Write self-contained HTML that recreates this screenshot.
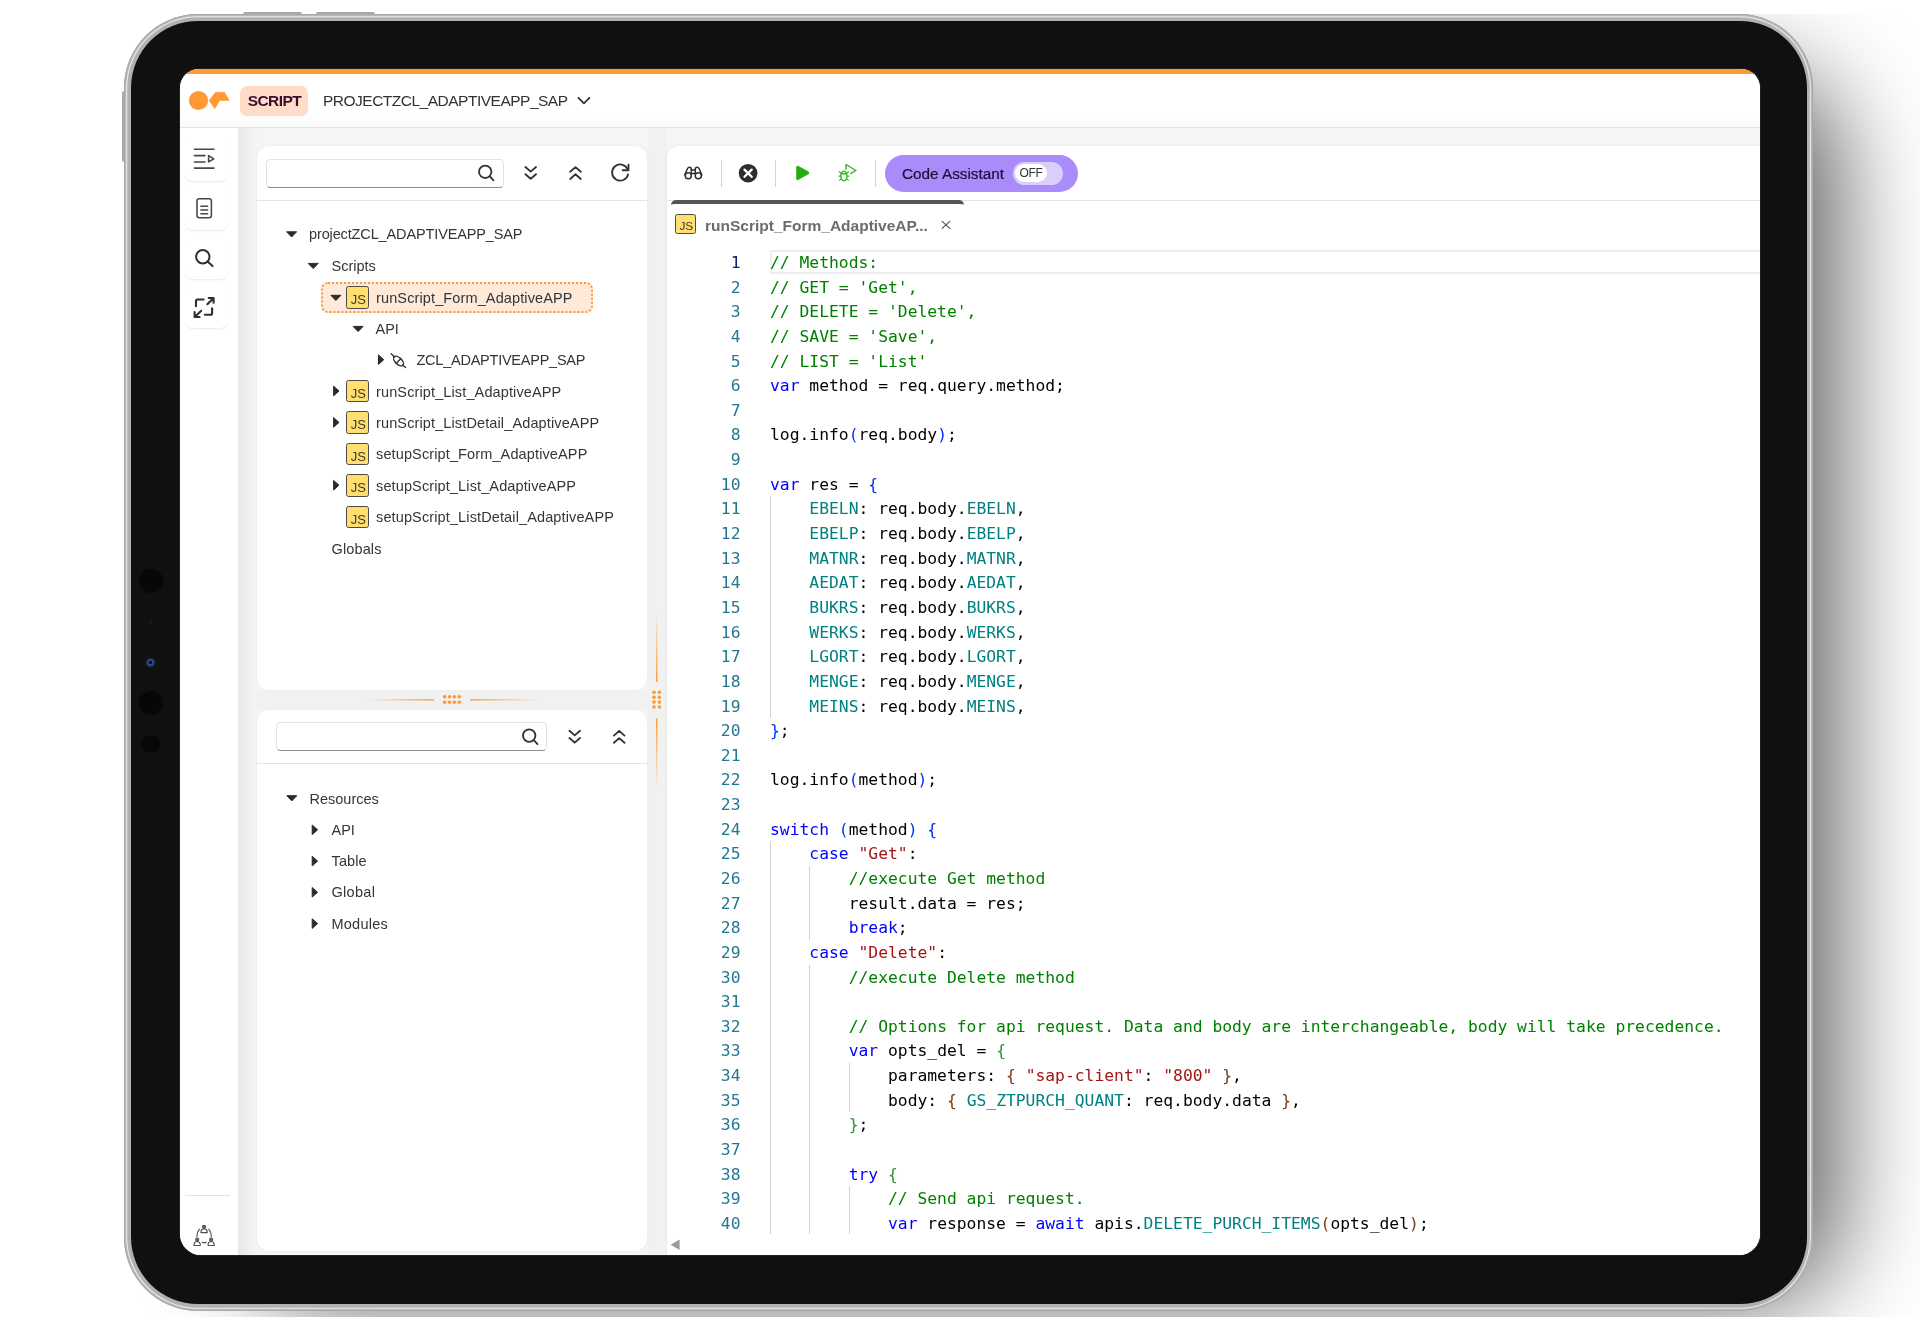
<!DOCTYPE html>
<html lang="en">
<head>
<meta charset="utf-8">
<title>Script Editor</title>
<style>
*{box-sizing:border-box;margin:0;padding:0}
html,body{width:1920px;height:1317px;overflow:hidden;background:#fff}
body{position:relative;font-family:"Liberation Sans",Arial,sans-serif;color:#32363a}
svg{position:absolute;overflow:visible}
/* ---------- device ---------- */
#shw{position:absolute;left:0;top:14px;width:1920px;height:1303px;overflow:hidden}
#shadow{position:absolute;left:240px;top:56px;width:1600px;height:1235px;border-radius:90px;background:rgba(0,0,0,.62);filter:blur(50px)}
#btnTop1,#btnTop2,#btnLeft{position:absolute;background:linear-gradient(#a2a2a2,#c4c4c4);border-radius:2px}
#btnTop1{left:243px;top:11.5px;width:59px;height:5px}
#btnTop2{left:316px;top:11.5px;width:59px;height:5px}
#btnLeft{left:122px;top:91px;width:5px;height:71px;background:linear-gradient(90deg,#a2a2a2,#c4c4c4)}
#frame{position:absolute;left:123.7px;top:13.5px;width:1689.8px;height:1297px;border-radius:74px;
  background:#b1b1b1;box-shadow:inset 0 0 0 .8px #a4a4a4, inset 0 0 0 2.2px #b8b8b8, inset 0 0 0 3.2px #ededed}
#bezel{position:absolute;left:130.6px;top:20.5px;width:1676.2px;height:1283.2px;border-radius:67px;background:#101010}
.cam{position:absolute;border-radius:50%;background:#070707}
#screen{position:absolute;left:180px;top:69px;width:1580px;height:1186px;border-radius:19px 19px 21px 21px;box-shadow:0 0 0 1px #222;overflow:hidden;background:#f5f5f6}
#app{position:absolute;left:-180px;top:-69px;width:1920px;height:1317px;will-change:transform}
#topbar{position:absolute;left:180px;top:69px;width:1580px;height:5px;background:#ff9a33}
#header{position:absolute;left:180px;top:74px;width:1580px;height:54px;background:linear-gradient(#fff 70%,#fafafa);border-bottom:1px solid #e3e3e3}
#badge{position:absolute;left:240.4px;top:86px;width:67.5px;height:29.5px;border-radius:7px;background:#ffdcc6;
  color:#3a0c30;font-weight:700;font-size:15.5px;letter-spacing:-.57px;line-height:30.5px;text-align:center;padding-left:.6px}
#proj{position:absolute;left:323px;top:86px;height:29px;line-height:29px;font-size:15.5px;letter-spacing:-.5px;color:#2f3338;white-space:nowrap}
#sidebar{position:absolute;left:180px;top:128px;width:58px;height:1127px;background:#fff}
#sideshadow{position:absolute;left:238px;top:128px;width:19px;height:1127px;background:linear-gradient(90deg,#e8e8ea,#f5f5f6)}
.sbtn{position:absolute;left:184px;width:45px;height:44px;border-radius:9px;background:#fff;box-shadow:0 2px 2px -1px rgba(0,0,0,.09)}
#sideline{position:absolute;left:185px;top:1195px;width:45px;height:1px;background:#e2e2e2}
.panel{position:absolute;background:#fff;border-radius:12px;box-shadow:0 0 2px rgba(0,0,0,.10)}
#p1{left:257px;top:146px;width:390px;height:544px}
.split{position:absolute;background:#f1f1f1}
#p2{left:257px;top:709.5px;width:390px;height:541.5px}
#ed{left:667px;top:146px;width:1120px;height:1120px;border-radius:12px 0 0 0}
.hline{position:absolute;height:1px;background:#e4e4e4}
.inp{position:absolute;height:29.3px;border:1.3px solid #e2e2e2;border-bottom:1.3px solid #8c8c8c;border-radius:4.5px;background:#fff}
/* ---------- tree ---------- */
.tr{position:absolute;height:31px;line-height:31px;font-size:14.5px;color:#32363a;white-space:nowrap;margin-top:.5px}
.lc{letter-spacing:.125px}
.js{position:absolute;width:22.4px;height:22.4px;border:1.9px solid #4b4a46;border-radius:2.5px;background:#ffdf70;
  font-size:13px;line-height:25.4px;color:#3b3828;text-align:right;padding-right:1.7px;letter-spacing:0;overflow:hidden;margin:-.2px 0 0 -.2px}
#sel{position:absolute;left:321px;top:282px;width:272px;height:31px;border:2px dotted #ff9a36;border-radius:7px;background:#ffead9}
/* ---------- editor ---------- */
.vsep{position:absolute;width:1px;top:160px;height:27px;background:#d4d4d4}
#pill{position:absolute;left:885px;top:155px;width:193px;height:37px;border-radius:19px;background:#a98cf9}
#pilltxt{-webkit-text-stroke:.2px #1c0f38;position:absolute;left:902px;top:155px;height:37px;line-height:37px;font-size:15.3px;color:#1c0f38;white-space:nowrap}
#tog{position:absolute;left:1013px;top:162px;width:50px;height:23px;border-radius:12px;background:#d9cefc}
#knob{position:absolute;left:1015px;top:164px;width:32px;height:18px;border-radius:9px;background:#fff;
  font-size:12px;line-height:19px;text-align:center;color:#333;letter-spacing:-.3px}
#tabbar{position:absolute;left:671px;top:200px;width:293px;height:8px;border-top:4px solid #555;border-radius:5px 5px 0 0}
#tabtxt{position:absolute;left:705px;top:212.5px;height:25px;line-height:25px;font-size:15.5px;font-weight:700;color:#6a6d70;white-space:nowrap}
#code{position:absolute;left:667px;top:251px;width:1100px;height:983px;overflow:hidden;font-family:"DejaVu Sans Mono","Liberation Mono",monospace;font-size:16.33px;color:#000}
.ln{position:absolute;left:0;width:1100px;height:24.64px;line-height:24.64px;white-space:pre}
.ln i{position:absolute;left:0;width:73.5px;text-align:right;color:#237893;font-style:normal}
.ln b{position:absolute;left:103px;font-weight:400}
.g{position:absolute;width:1px;background:#d3d3d3}
.k{color:#0000ff}.c{color:#008000}.s{color:#a31515}.t{color:#008080}
.b1{color:#0431fa}.b2{color:#319331}.b3{color:#7b3814}
#cur{position:absolute;left:770px;top:250px;width:1000px;height:24px;border:2px solid #eee}
</style>
</head>
<body>
<div id="shw"><div id="shadow"></div></div>
<div id="btnTop1"></div><div id="btnTop2"></div><div id="btnLeft"></div>
<div id="frame"></div>
<div id="bezel"></div>
<div class="cam" style="left:139px;top:569px;width:24px;height:24px"></div>
<div class="cam" style="left:149px;top:620px;width:4px;height:4px;background:#1b1b1b"></div>
<div class="cam" style="left:145px;top:657px;width:11px;height:11px;background:#1d1d1f"></div>
<div class="cam" style="left:147px;top:659px;width:7px;height:7px;background:radial-gradient(circle at 50% 50%,#07122a 0 28%,#2b5fc0 50%,#14306c 100%)"></div>
<div class="cam" style="left:139px;top:691px;width:24px;height:24px"></div>
<div class="cam" style="left:142px;top:735px;width:18px;height:18px"></div>
<div id="screen"><div id="app">
  <div id="topbar"></div>
  <div id="header"></div>
  <!-- logo -->
  <svg style="left:180px;top:74px" width="60" height="54" viewBox="180 74 60 54">
    <circle cx="198.5" cy="100.5" r="9.6" fill="#ff9a33"/>
    <path d="M209.2 100.5 L215.6 92.2 L224.3 92.2 L229.3 100.5 L219.6 100.5 L214.8 108.8 Z" fill="#ff9a33" stroke="#ff9a33" stroke-width=".6" stroke-linejoin="round"/>
  </svg>
  <div id="badge">SCRIPT</div>
  <div id="proj">PROJECTZCL_ADAPTIVEAPP_SAP</div>
  <svg style="left:576px;top:94px" width="16" height="14" viewBox="576 94 16 14">
    <path d="M578.4 97.8 L583.9 103.3 L589.4 97.8" fill="none" stroke="#32363a" stroke-width="1.8" stroke-linecap="round" stroke-linejoin="round"/>
  </svg>
  <div id="sidebar"></div>
  <div id="sideshadow"></div>
  <div class="sbtn" style="top:137px"></div>
  <div class="sbtn" style="top:186px"></div>
  <div class="sbtn" style="top:235px"></div>
  <div class="sbtn" style="top:284px"></div>
  <!-- sidebar icons -->
  <svg style="left:180px;top:128px" width="58" height="220" viewBox="180 128 58 220" fill="none" stroke="#474747" stroke-linecap="round" stroke-linejoin="round">
    <g stroke-width="1.55">
      <path d="M194.4 149.3H214 M194.4 155.6H205 M194.4 161.9H205 M194.4 168.1H214"/>
      <path d="M208.6 155.6L213.8 158.8L208.6 161.9Z"/>
      <rect x="197" y="198.7" width="14.4" height="19" rx="2.2"/>
      <path d="M200.9 206.2H207.6 M200.9 210H207.6 M200.9 213.8H207.6"/>
    </g>
    <g stroke-width="2" stroke="#2f2f2f">
      <circle cx="202.8" cy="256.8" r="6.7"/>
      <path d="M207.8 261.7L212.6 266.1"/>
    </g>
    <g stroke-width="2.1" stroke="#2f2f2f">
      <path d="M196 306.3V301 Q196 299.5 197.5 299.5H203.6"/>
      <path d="M204.9 314.8H210.6 Q212.1 314.8 212.1 313.3V308.3"/>
      <path d="M207.4 304.2L213.5 298.1 M208.7 298H213.6V302.8"/>
      <path d="M201.2 310.8L194.7 316.9 M194.6 312.1V317H199.6"/>
    </g>
  </svg>
  <div id="sideline"></div>
  <!-- bottom sidebar icon -->
  <svg style="left:190px;top:1222px" width="28" height="28" viewBox="190 1222 28 28" fill="none" stroke="#505050" stroke-width="1.2" stroke-linecap="round" stroke-linejoin="round">
    <circle cx="204.05" cy="1226.8" r="1.5" fill="#777"/><path d="M201.0 1232.7Q200.8 1228.8 204.05 1228.6Q207.4 1228.8 207.2 1232.7Z"/>
    <circle cx="197.2" cy="1239.7" r="1.5" fill="#777"/><path d="M194.1 1245.5Q193.9 1241.7 197.2 1241.5Q200.5 1241.7 200.3 1245.5Z"/>
    <circle cx="211.15" cy="1239.7" r="1.5" fill="#777"/><path d="M208.1 1245.5Q207.8 1241.7 211.15 1241.5Q214.5 1241.7 214.2 1245.5Z"/>
    <path d="M199.4 1229.2Q196.9 1232.2 196.9 1236.4M208.8 1229.2Q211.3 1232.2 211.3 1236.4M202.2 1242.3Q204.2 1243.4 206.3 1242.3"/>
  </svg>
  <div class="split" style="left:648px;top:128px;width:18.5px;height:1127px"></div>
  <div class="split" style="left:256px;top:690.5px;width:392px;height:18.5px"></div>
  <div class="panel" id="p1"></div>
  <div class="panel" id="p2"></div>
  <!-- panel 1 toolbar -->
  <div class="inp" style="left:265.8px;top:158.6px;width:238px"></div>
  <div class="hline" style="left:257px;top:200px;width:390px"></div>
  <svg style="left:470px;top:155px" width="170" height="36" viewBox="470 155 170 36" fill="none" stroke="#333" stroke-width="1.85" stroke-linecap="round" stroke-linejoin="round">
    <circle cx="485.2" cy="171.8" r="6.2"/><path d="M489.8 176.4L493.5 180.3"/>
    <path d="M525.4 167L530.7 171.6L536 167 M525.4 174.2L530.7 178.8L536 174.2"/>
    <path d="M570.2 171.8L575.5 167.1L580.8 171.8 M570.2 179L575.5 174.3L580.8 179"/>
    <path d="M627.6 169.2 A8.1 8.1 0 1 0 628.1 174.4"/>
    <path d="M628.5 164.6V170.2H622.7"/>
  </svg>
  <!-- tree 1 -->
  <div id="sel"></div>
  <svg style="left:257px;top:200px" width="390" height="380" viewBox="257 200 390 380" fill="#2b2b2b" stroke="#2b2b2b" stroke-width="1" stroke-linejoin="round">
    <path d="M286.6 231.8H296.6L291.6 237Z"/>
    <path d="M308.2 263.4H318.2L313.2 268.6Z"/>
    <path d="M330.9 295.3H340.9L335.9 300.5Z"/>
    <path d="M353.1 326.4H363.1L358.1 331.6Z"/>
    <path d="M378.4 354.9V364.5L383.8 359.7Z"/>
    <path d="M333.6 386.2V395.8L339 391Z"/>
    <path d="M333.6 417.6V427.2L339 422.4Z"/>
    <path d="M333.6 480.4V490L339 485.2Z"/>
    <g fill="none" stroke="#333" stroke-width="1.4" stroke-linecap="round">
      <path d="M391.2 353.8L394.4 356.9M402.7 364.9L405.6 367.6"/>
      <ellipse cx="398.5" cy="361" rx="6" ry="3.3" transform="rotate(44 398.5 361)"/>
      <path d="M400.7 358.8L396.3 363.2"/>
    </g>
  </svg>
  <div class="tr" style="left:309px;top:218.4px;letter-spacing:-.13px">projectZCL_ADAPTIVEAPP_SAP</div>
  <div class="tr" style="left:331.5px;top:250.5px">Scripts</div>
  <div class="js" style="left:346.5px;top:286.5px">JS</div>
  <div class="tr lc" style="left:376px;top:282px">runScript_Form_AdaptiveAPP</div>
  <div class="tr" style="left:375.5px;top:313.3px">API</div>
  <div class="tr" style="left:416.5px;top:344.6px;letter-spacing:-.24px">ZCL_ADAPTIVEAPP_SAP</div>
  <div class="js" style="left:346.5px;top:380.2px">JS</div>
  <div class="tr lc" style="left:376px;top:376px">runScript_List_AdaptiveAPP</div>
  <div class="js" style="left:346.5px;top:411.6px">JS</div>
  <div class="tr lc" style="left:376px;top:407.4px">runScript_ListDetail_AdaptiveAPP</div>
  <div class="js" style="left:346.5px;top:443px">JS</div>
  <div class="tr lc" style="left:376px;top:438.8px">setupScript_Form_AdaptiveAPP</div>
  <div class="js" style="left:346.5px;top:474.4px">JS</div>
  <div class="tr lc" style="left:376px;top:470.2px">setupScript_List_AdaptiveAPP</div>
  <div class="js" style="left:346.5px;top:505.8px">JS</div>
  <div class="tr lc" style="left:376px;top:501.6px">setupScript_ListDetail_AdaptiveAPP</div>
  <div class="tr lc" style="left:331.5px;top:533px">Globals</div>
  <!-- splitters -->
  <svg style="left:360px;top:600px" width="310" height="200" viewBox="360 600 310 200">
    <defs>
      <linearGradient id="gl" x1="0" x2="1"><stop offset="0" stop-color="#ff9a33" stop-opacity="0"/><stop offset="1" stop-color="#ff9a33"/></linearGradient>
      <linearGradient id="gr" x1="0" x2="1"><stop offset="0" stop-color="#ff9a33"/><stop offset="1" stop-color="#ff9a33" stop-opacity="0"/></linearGradient>
      <linearGradient id="gt" x1="0" x2="0" y1="0" y2="1"><stop offset="0" stop-color="#ff9a33" stop-opacity="0"/><stop offset="1" stop-color="#ff9a33"/></linearGradient>
      <linearGradient id="gb" x1="0" x2="0" y1="0" y2="1"><stop offset="0" stop-color="#ff9a33"/><stop offset="1" stop-color="#ff9a33" stop-opacity="0"/></linearGradient>
    </defs>
    <rect x="366" y="699.1" width="68.2" height="1.4" fill="url(#gl)"/>
    <rect x="470.1" y="699.1" width="71" height="1.4" fill="url(#gr)"/>
    <g fill="#ff9a33">
      <circle cx="444.6" cy="696.8" r="1.8"/><circle cx="449.5" cy="696.8" r="1.8"/><circle cx="454.4" cy="696.8" r="1.8"/><circle cx="459.3" cy="696.8" r="1.8"/><circle cx="444.6" cy="702.3" r="1.8"/><circle cx="449.5" cy="702.3" r="1.8"/><circle cx="454.4" cy="702.3" r="1.8"/><circle cx="459.3" cy="702.3" r="1.8"/><circle cx="654" cy="692.2" r="1.8"/><circle cx="659.4" cy="692.2" r="1.8"/><circle cx="654" cy="697.2" r="1.8"/><circle cx="659.4" cy="697.2" r="1.8"/><circle cx="654" cy="702.1" r="1.8"/><circle cx="659.4" cy="702.1" r="1.8"/><circle cx="654" cy="707" r="1.8"/><circle cx="659.4" cy="707" r="1.8"/>
    </g>
    <rect x="656" y="611" width="1.4" height="71" fill="url(#gt)"/>
    <rect x="656" y="718.3" width="1.4" height="71" fill="url(#gb)"/>
  </svg>
  <!-- panel 2 toolbar -->
  <div class="inp" style="left:275.5px;top:722px;width:271.5px"></div>
  <div class="hline" style="left:257px;top:762.7px;width:390px"></div>
  <svg style="left:515px;top:718px" width="120" height="36" viewBox="515 718 120 36" fill="none" stroke="#333" stroke-width="1.85" stroke-linecap="round" stroke-linejoin="round">
    <circle cx="529.2" cy="735.6" r="6.2"/><path d="M533.8 740.2L537.5 744.1"/>
    <path d="M569.4 730.8L574.7 735.4L580 730.8 M569.4 738L574.7 742.6L580 738"/>
    <path d="M613.9 735.6L619.2 730.9L624.5 735.6 M613.9 742.8L619.2 738.1L624.5 742.8"/>
  </svg>
  <!-- tree 2 -->
  <svg style="left:257px;top:770px" width="390" height="180" viewBox="257 770 390 180" fill="#2b2b2b" stroke="#2b2b2b" stroke-width="1" stroke-linejoin="round">
    <path d="M286.8 795.7H296.8L291.8 800.9Z"/>
    <path d="M312.2 825V834.6L317.6 829.8Z"/>
    <path d="M312.2 856.3V865.9L317.6 861.1Z"/>
    <path d="M312.2 887.5V897.1L317.6 892.3Z"/>
    <path d="M312.2 918.8V928.4L317.6 923.6Z"/>
  </svg>
  <div class="tr" style="left:309.5px;top:783px">Resources</div>
  <div class="tr" style="left:331.5px;top:814.3px">API</div>
  <div class="tr lc" style="left:331.5px;top:845.6px">Table</div>
  <div class="tr" style="left:331.5px;top:876.8px;letter-spacing:.3px">Global</div>
  <div class="tr" style="left:331.5px;top:908.1px;letter-spacing:.23px">Modules</div>
  <div class="panel" id="ed"></div>
  <div class="hline" style="left:667px;top:199.5px;width:1100px"></div>
  <!-- editor toolbar icons -->
  <svg style="left:675px;top:155px" width="210" height="36" viewBox="675 155 210 36" stroke-linecap="round" stroke-linejoin="round">
    <g fill="none" stroke="#2e2e2e" stroke-width="1.5">
      <circle cx="688.3" cy="175.8" r="3.05"/><circle cx="698.3" cy="175.8" r="3.05"/>
      <path d="M684.7 175L687.5 168.5Q688.2 167.2 689.6 167.2Q691.3 167.2 691.3 169V174"/>
      <path d="M701.9 175L699.1 168.5Q698.4 167.2 697 167.2Q695.3 167.2 695.3 169V174"/>
      <path d="M691.3 169.9H695.3M691.3 173.5H695.3"/>
    </g>
    <circle cx="748.1" cy="173.2" r="9.3" fill="#2d2d2d"/>
    <path d="M744.5 169.6L751.7 176.8M751.7 169.6L744.5 176.8" stroke="#fff" stroke-width="2.3" fill="none"/>
    <path d="M797.7 167.3L807.7 172.85L797.7 178.4Z" fill="#25ad0e" stroke="#25ad0e" stroke-width="3"/>
    <g fill="none" stroke="#36b829" stroke-width="1.45">
      <path d="M846 169.3V164.5L856 170.5L850.7 173.7"/>
      <ellipse cx="843.9" cy="176" rx="3.1" ry="4.7"/>
      <path d="M841.2 173.8H846.6"/>
      <path d="M840.7 172.7L839.3 171.9M840.5 176H838.9M841 179.2L839.5 180.2M847.1 172.7L848.5 171.9M847.3 176H848.9M846.8 179.2L848.3 180.2" stroke-width="1.25"/>
    </g>
  </svg>
  <div class="vsep" style="left:720.5px"></div>
  <div class="vsep" style="left:775.3px"></div>
  <div class="vsep" style="left:875px"></div>
  <div id="pill"></div>
  <div id="pilltxt">Code Assistant</div>
  <div id="tog"></div>
  <div id="knob">OFF</div>
  <!-- tab -->
  <div id="tabbar"></div>
  <div class="js" style="left:675.5px;top:214px;width:20.4px;height:20.4px;font-size:11.8px;line-height:22.6px;padding-right:1.5px">JS</div>
  <div id="tabtxt">runScript_Form_AdaptiveAP...</div>
  <svg style="left:940px;top:219px" width="12" height="12" viewBox="940 219 12 12" fill="none" stroke="#555" stroke-width="1.2" stroke-linecap="round">
    <path d="M942.2 221.4L949.8 228.4M949.8 221.4L942.2 228.4"/>
  </svg>
  <div id="cur"></div>
  <div id="code">
<div class="ln" style="top:0.00px"><i style="color:#0b216f">1</i><b><span class="c">// Methods:</span></b></div>
<div class="ln" style="top:24.64px"><i>2</i><b><span class="c">// GET = &#x27;Get&#x27;,</span></b></div>
<div class="ln" style="top:49.28px"><i>3</i><b><span class="c">// DELETE = &#x27;Delete&#x27;,</span></b></div>
<div class="ln" style="top:73.92px"><i>4</i><b><span class="c">// SAVE = &#x27;Save&#x27;,</span></b></div>
<div class="ln" style="top:98.56px"><i>5</i><b><span class="c">// LIST = &#x27;List&#x27;</span></b></div>
<div class="ln" style="top:123.20px"><i>6</i><b><span class="k">var</span> method = req.query.method;</b></div>
<div class="ln" style="top:147.84px"><i>7</i><b></b></div>
<div class="ln" style="top:172.48px"><i>8</i><b>log.info<span class="b1">(</span>req.body<span class="b1">)</span>;</b></div>
<div class="ln" style="top:197.12px"><i>9</i><b></b></div>
<div class="ln" style="top:221.76px"><i>10</i><b><span class="k">var</span> res = <span class="b1">{</span></b></div>
<div class="ln" style="top:246.40px"><i>11</i><b>    <span class="t">EBELN</span>: req.body.<span class="t">EBELN</span>,</b></div>
<div class="ln" style="top:271.04px"><i>12</i><b>    <span class="t">EBELP</span>: req.body.<span class="t">EBELP</span>,</b></div>
<div class="ln" style="top:295.68px"><i>13</i><b>    <span class="t">MATNR</span>: req.body.<span class="t">MATNR</span>,</b></div>
<div class="ln" style="top:320.32px"><i>14</i><b>    <span class="t">AEDAT</span>: req.body.<span class="t">AEDAT</span>,</b></div>
<div class="ln" style="top:344.96px"><i>15</i><b>    <span class="t">BUKRS</span>: req.body.<span class="t">BUKRS</span>,</b></div>
<div class="ln" style="top:369.60px"><i>16</i><b>    <span class="t">WERKS</span>: req.body.<span class="t">WERKS</span>,</b></div>
<div class="ln" style="top:394.24px"><i>17</i><b>    <span class="t">LGORT</span>: req.body.<span class="t">LGORT</span>,</b></div>
<div class="ln" style="top:418.88px"><i>18</i><b>    <span class="t">MENGE</span>: req.body.<span class="t">MENGE</span>,</b></div>
<div class="ln" style="top:443.52px"><i>19</i><b>    <span class="t">MEINS</span>: req.body.<span class="t">MEINS</span>,</b></div>
<div class="ln" style="top:468.16px"><i>20</i><b><span class="b1">}</span>;</b></div>
<div class="ln" style="top:492.80px"><i>21</i><b></b></div>
<div class="ln" style="top:517.44px"><i>22</i><b>log.info<span class="b1">(</span>method<span class="b1">)</span>;</b></div>
<div class="ln" style="top:542.08px"><i>23</i><b></b></div>
<div class="ln" style="top:566.72px"><i>24</i><b><span class="k">switch</span> <span class="b1">(</span>method<span class="b1">)</span> <span class="b1">{</span></b></div>
<div class="ln" style="top:591.36px"><i>25</i><b>    <span class="k">case</span> <span class="s">&quot;Get&quot;</span>:</b></div>
<div class="ln" style="top:616.00px"><i>26</i><b>        <span class="c">//execute Get method</span></b></div>
<div class="ln" style="top:640.64px"><i>27</i><b>        result.data = res;</b></div>
<div class="ln" style="top:665.28px"><i>28</i><b>        <span class="k">break</span>;</b></div>
<div class="ln" style="top:689.92px"><i>29</i><b>    <span class="k">case</span> <span class="s">&quot;Delete&quot;</span>:</b></div>
<div class="ln" style="top:714.56px"><i>30</i><b>        <span class="c">//execute Delete method</span></b></div>
<div class="ln" style="top:739.20px"><i>31</i><b></b></div>
<div class="ln" style="top:763.84px"><i>32</i><b>        <span class="c">// Options for api request. Data and body are interchangeable, body will take precedence.</span></b></div>
<div class="ln" style="top:788.48px"><i>33</i><b>        <span class="k">var</span> opts_del = <span class="b2">{</span></b></div>
<div class="ln" style="top:813.12px"><i>34</i><b>            parameters: <span class="b3">{</span> <span class="s">&quot;sap-client&quot;</span>: <span class="s">&quot;800&quot;</span> <span class="b3">}</span>,</b></div>
<div class="ln" style="top:837.76px"><i>35</i><b>            body: <span class="b3">{</span> <span class="t">GS_ZTPURCH_QUANT</span>: req.body.data <span class="b3">}</span>,</b></div>
<div class="ln" style="top:862.40px"><i>36</i><b>        <span class="b2">}</span>;</b></div>
<div class="ln" style="top:887.04px"><i>37</i><b></b></div>
<div class="ln" style="top:911.68px"><i>38</i><b>        <span class="k">try</span> <span class="b2">{</span></b></div>
<div class="ln" style="top:936.32px"><i>39</i><b>            <span class="c">// Send api request.</span></b></div>
<div class="ln" style="top:960.96px"><i>40</i><b>            <span class="k">var</span> response = <span class="k">await</span> apis.<span class="t">DELETE_PURCH_ITEMS</span><span class="b3">(</span>opts_del<span class="b3">)</span>;</b></div>
<div class="g" style="left:103.0px;top:245.40px;height:221.76px"></div>
<div class="g" style="left:103.0px;top:590.36px;height:394.24px"></div>
<div class="g" style="left:142.3px;top:615.00px;height:73.92px"></div>
<div class="g" style="left:142.3px;top:713.56px;height:271.04px"></div>
<div class="g" style="left:181.6px;top:812.12px;height:49.28px"></div>
<div class="g" style="left:181.6px;top:935.32px;height:49.28px"></div>
  </div>
  <!-- scrollbar arrow -->
  <svg style="left:668px;top:1238px" width="14" height="14" viewBox="668 1238 14 14">
    <path d="M670.6 1244.8L679.6 1239.6V1250Z" fill="#9a9a9a"/>
  </svg>
</div></div>
</body>
</html>
